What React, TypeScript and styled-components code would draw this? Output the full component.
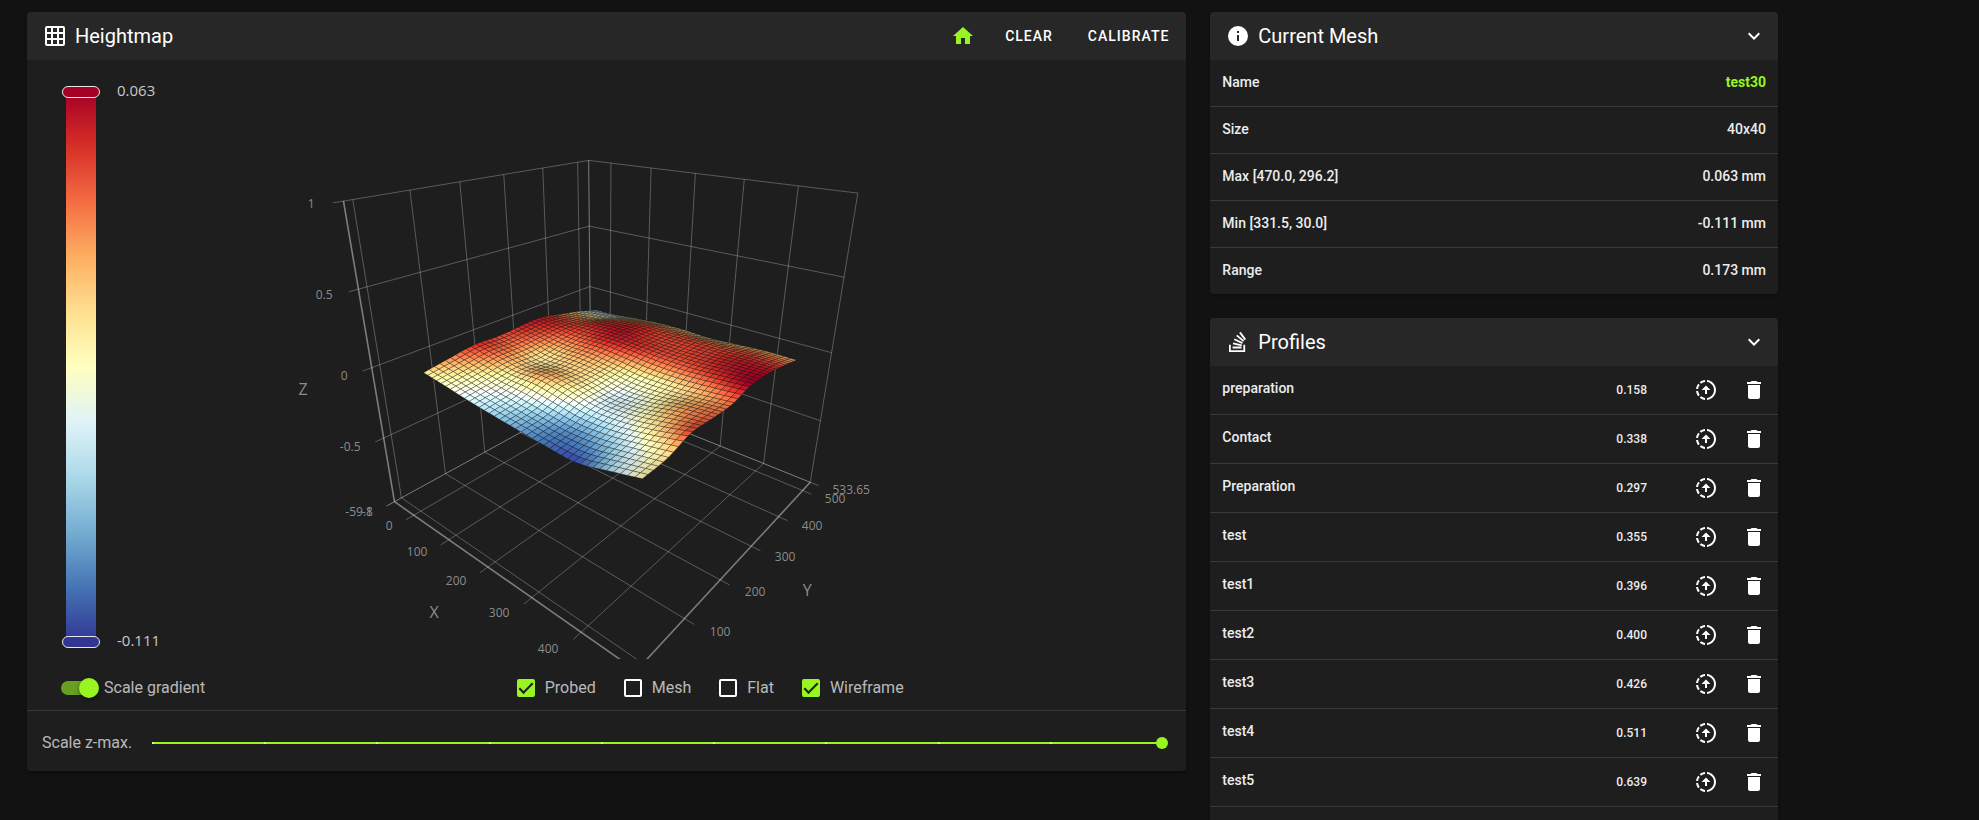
import React, { useState } from "react";
import styled, { createGlobalStyle } from "styled-components";

const accent = "#98f522";

const GlobalStyle = createGlobalStyle`
  *, *::before, *::after { box-sizing: border-box; }
  body {
    margin: 0;
    background: #121212;
    color: #fff;
    font-family: Roboto, "Liberation Sans", sans-serif;
    font-size: 16px;
    line-height: 24px;
  }
`;

/* ---------- icons ---------- */

const icons = {
  grid: "M10,4V8H14V4H10M16,4V8H20V4H16M16,10V14H20V10H16M16,16V20H20V16H16M14,20V16H10V20H14M8,20V16H4V20H8M8,14V10H4V14H8M8,8V4H4V8H8M10,14H14V10H10V14M4,2H20A2,2 0 0,1 22,4V20A2,2 0 0,1 20,22H4C2.92,22 2,21.1 2,20V4A2,2 0 0,1 4,2Z",
  home: "M10,20V14H14V20H19V12H22L12,3L2,12H5V20H10Z",
  info: "M13,9H11V7H13M13,17H11V11H13M12,2A10,10 0 0,0 2,12A10,10 0 0,0 12,22A10,10 0 0,0 22,12A10,10 0 0,0 12,2Z",
  chevron: "M7.41,8.58L12,13.17L16.59,8.58L18,10L12,16L6,10L7.41,8.58Z",
  stack: "M17.36,20.2V14.82H19.15V22H3V14.82H4.8V20.2H17.36M6.77,14.32L7.14,12.56L15.93,14.41L15.56,16.17L6.77,14.32M7.93,10.11L8.69,8.5L16.83,12.28L16.07,13.9L7.93,10.11M10.19,6.12L11.34,4.74L18.24,10.5L17.09,11.87L10.19,6.12M14.64,1.87L20,9.08L18.56,10.15L13.2,2.94L14.64,1.87M6.59,18.41V16.61H15.57V18.41H6.59Z",
  upload: "M13,2.03V2.05L13,4.05C17.39,4.59 20.5,8.58 19.96,12.97C19.5,16.61 16.64,19.5 13,19.93V21.93C18.5,21.38 22.5,16.5 21.95,11C21.5,6.25 17.73,2.5 13,2.03M11,2.06C9.05,2.25 7.19,3 5.67,4.26L7.1,5.74C8.22,4.84 9.57,4.26 11,4.06V2.06M4.26,5.67C3,7.19 2.25,9.04 2.05,11H4.05C4.24,9.58 4.8,8.23 5.69,7.1L4.26,5.67M2.06,13C2.26,14.96 3.03,16.81 4.27,18.33L5.69,16.9C4.81,15.77 4.24,14.42 4.06,13H2.06M7.1,18.37L5.67,19.74C7.18,21 9.04,21.79 11,22V20C9.58,19.82 8.23,19.25 7.1,18.37M12,7.5L7.5,12H11V16H13V12H16.5L12,7.5Z",
  trash: "M19,4H15.5L14.5,3H9.5L8.5,4H5V6H19M6,19A2,2 0 0,0 8,21H16A2,2 0 0,0 18,19V7H6V19Z",
};

const IconSvg = styled.svg`
  display: block;
  width: 24px;
  height: 24px;
  flex: none;
  fill: currentColor;
`;

const Icon = ({ name }: { name: keyof typeof icons }) => (
  <IconSvg viewBox="0 0 24 24" aria-hidden="true">
    <path d={icons[name]} />
  </IconSvg>
);

/* ---------- layout ---------- */

const Page = styled.main`
  height: 100vh;
  overflow-y: auto;
  scrollbar-width: none;
`;

const Columns = styled.div`
  display: flex;
  align-items: flex-start;
  max-width: 1775px;
  margin-left: 15px;
  padding-top: 12px;
`;

const Column = styled.div<{ $share: number }>`
  flex: none;
  width: calc(100% * ${(p) => p.$share} / 3);
  min-width: 0;
  display: flex;
  flex-direction: column;
  gap: 24px;
  padding: 0 12px;
`;

const Card = styled.section`
  background: #1e1e1e;
  border-radius: 4px;
  overflow: hidden;
  box-shadow: 0 2px 3px rgba(0, 0, 0, 0.3);
`;

const CardHeader = styled.header`
  display: flex;
  align-items: center;
  gap: 8px;
  height: 48px;
  padding: 0 12px 0 16px;
  background: #272727;
`;

const CardTitle = styled.h2`
  flex: 1;
  margin: 0;
  font-size: 20px;
  font-weight: 400;
  line-height: 24px;
`;

const IconButton = styled.button<{ $accent?: boolean }>`
  display: inline-flex;
  padding: 0;
  border: 0;
  background: none;
  color: ${(p) => (p.$accent ? accent : "#fff")};
  cursor: pointer;
  vertical-align: middle;
`;

const HeaderActions = styled.div`
  display: flex;
  align-items: center;
`;

const TextButton = styled.button`
  padding: 0 5px 0 30px;
  border: 0;
  background: none;
  color: #fff;
  font: 500 14px/20px Roboto, "Liberation Sans", sans-serif;
  letter-spacing: 1px;
  text-transform: uppercase;
  cursor: pointer;
`;

/* ---------- chart ---------- */

const ChartArea = styled.div`
  display: grid;
  > * { grid-area: 1 / 1; }
`;

const Plot = styled.svg`
  display: block;
  width: 100%;
  height: 599px;
  font-family: "Open Sans", "Noto Sans", sans-serif;
`;

const Legend = styled.div`
  display: flex;
  gap: 17px;
  height: 562px;
  margin: 26px 0 0 35px;
  justify-self: start;
`;

const LegendScale = styled.div`
  display: flex;
  flex-direction: column;
  align-items: center;
`;

const LegendHandle = styled.div<{ $color: string }>`
  position: relative;
  width: 38px;
  height: 12px;
  border: 1px solid #e8e8e8;
  border-radius: 6px;
  background: ${(p) => p.$color};
`;

const LegendBar = styled.div`
  flex: 1;
  width: 30px;
  margin: -6px 0;
  background: linear-gradient(
    #a50026, #d73027, #f46d43, #fdae61, #fee090, #ffffbf,
    #e0f3f8, #abd9e9, #74add1, #4575b4, #313695
  );
`;

const LegendLabels = styled.div`
  display: flex;
  flex-direction: column;
  justify-content: space-between;
  padding-bottom: 4px;
  color: #c8c8c8;
  font: 15px/8px "Open Sans", "Noto Sans", sans-serif;
`;

const stops = [
  [0x31, 0x36, 0x95], [0x45, 0x75, 0xb4], [0x74, 0xad, 0xd1], [0xab, 0xd9, 0xe9],
  [0xe0, 0xf3, 0xf8], [0xff, 0xff, 0xbf], [0xfe, 0xe0, 0x90], [0xfd, 0xae, 0x61],
  [0xf4, 0x6d, 0x43], [0xd7, 0x30, 0x27], [0xa5, 0x00, 0x26],
];

/* relative heights, one row per Y position (front to back), one column per X position */
const heights = [
  [0.62, 0.5, 0.36, 0.25, 0.16, 0.07, 0.02, 0.27, 0.54],
  [0.77, 0.62, 0.48, 0.38, 0.26, 0.16, 0.22, 0.4, 0.6],
  [0.91, 0.77, 0.63, 0.7, 0.55, 0.38, 0.42, 0.6, 0.86],
  [0.87, 0.76, 0.58, 0.62, 0.57, 0.4, 0.48, 0.7, 0.82],
  [0.93, 0.83, 0.72, 0.74, 0.65, 0.55, 0.57, 0.67, 0.8],
  [0.95, 0.89, 0.86, 0.92, 0.88, 0.82, 0.82, 0.9, 1],
  [0.76, 0.78, 0.92, 0.95, 0.88, 0.86, 0.88, 0.95, 0.98],
  [0.55, 0.55, 0.74, 0.85, 0.83, 0.84, 0.84, 0.87, 0.85],
  [0.28, 0.33, 0.45, 0.54, 0.56, 0.53, 0.6, 0.67, 0.67],
];

const cubic = (p: number[], t: number) =>
  p[1] + 0.5 * t * (p[2] - p[0] + t * (2 * p[0] - 5 * p[1] + 4 * p[2] - p[3] + t * (3 * (p[1] - p[2]) + p[3] - p[0])));

const along = (values: number[], t: number) => {
  const last = values.length - 1;
  const i = Math.min(last - 1, Math.floor(t * last));
  const at = (k: number) =>
    k < 0 ? 2 * values[0] - values[1] : k > last ? 2 * values[last] - values[last - 1] : values[k];
  return cubic([at(i - 1), at(i), at(i + 1), at(i + 2)], t * last - i);
};

const level = (u: number, v: number) =>
  Math.max(0, Math.min(1, along(heights.map((row) => along(row, u)), v)));

/* homogeneous projection of the plot box: origin plus one vector per axis */
const origin = [367.3, 441.7, 1];
const axisX = [73.1, -0.1, -0.277];
const axisY = [377.9, -0.3, 0.322];
const axisZ = [-113, -328.3, -0.196];

type Point = [number, number];

const project = (s: number, t: number, h: number): Point => {
  const [x, y, w] = origin.map((o, i) => o + s * axisX[i] + t * axisY[i] + h * axisZ[i]);
  return [x / w, y / w];
};

const sx = (x: number) => (x + 59.8) / 558;
const sy = (y: number) => (y + 15) / 548.65;
const sz = (z: number) => (z + 1) / 2;

const paint = (n: number, shade: number) => {
  const f = n * 10;
  const i = Math.min(9, Math.floor(f));
  const c = stops[i].map((a, k) => Math.round(Math.min(255, (a + (stops[i + 1][k] - a) * (f - i)) * shade)));
  return `rgb(${c.join(",")})`;
};

const count = 39;

const buildCells = () => {
  const levels = Array.from({ length: count + 1 }, (_, j) =>
    Array.from({ length: count + 1 }, (_, i) => level(i / count, j / count)),
  );
  const corner = (i: number, j: number) =>
    project(sx(20 + (446 * i) / count), sy(30 + (432.5 * j) / count), sz(-0.111 + 0.174 * levels[j][i]));
  const cells: { points: string; fill: string }[] = [];
  for (let j = count - 1; j >= 0; j--) {
    for (let i = 0; i < count; i++) {
      const [a, b, c, d] = [levels[j][i], levels[j][i + 1], levels[j + 1][i + 1], levels[j + 1][i]];
      const slopeX = ((b + c - a - d) / 2) * count;
      const slopeY = ((c + d - a - b) / 2) * count;
      const shade = Math.max(0.82, Math.min(1.08, 0.95 + 0.08 * slopeY - 0.05 * slopeX));
      cells.push({
        points: [corner(i, j), corner(i + 1, j), corner(i + 1, j + 1), corner(i, j + 1)]
          .map((p) => p.map((q) => q.toFixed(1)).join(","))
          .join(" "),
        fill: paint((a + b + c + d) / 4, shade),
      });
    }
  }
  return cells;
};

const cells = buildCells();

const segment = (a: Point, b: Point) => `M${a[0].toFixed(1)} ${a[1].toFixed(1)}L${b[0].toFixed(1)} ${b[1].toFixed(1)}`;

const xTicks = [0, 100, 200, 300, 400].map(sx);
const yTicks = [0, 100, 200, 300, 400, 500].map(sy);
const zTicks = [-0.5, 0, 0.5, 1].map(sz);

const gridLines = [
  ...xTicks.flatMap((s) => [
    segment(project(s, -0.03, 0), project(s, 1, 0)),
    segment(project(s, 1, 0), project(s, 1, 1)),
  ]),
  ...yTicks.flatMap((t) => [
    segment(project(0, t, 0), project(1.03, t, 0)),
    segment(project(0, t, 0), project(0, t, 1)),
  ]),
  ...zTicks.flatMap((h) => [
    segment(project(0, -0.03, h), project(0, 1, h)),
    segment(project(0, 1, h), project(1, 1, h)),
  ]),
  segment(project(1, 1, 0), project(1, 1, 1)),
  segment(project(1, 1, 0), project(1.03, 1, 0)),
].join("");

const edgeLines = [
  segment(project(0, -0.03, 0), project(0, 1, 0)),
  segment(project(0, 1, 0), project(1, 1, 0)),
  segment(project(0, 1, 0), project(0, 1, 1)),
].join("");

const axisLines = [
  segment(project(0, 0, 0), project(0, 0, 1)),
  segment(project(0, 0, 0), project(1, 0, 0)),
  segment(project(1, 0, 0), project(1, 1, 0)),
].join("");

const tickLabels: [string, number, number][] = [
  ["1", 284, 144], ["0.5", 297, 235], ["0", 317, 316], ["-0.5", 323, 387],
  ["-59.8", 332, 452], ["-1", 340, 452],
  ["0", 362, 466], ["100", 390, 492], ["200", 429, 521], ["300", 472, 553], ["400", 521, 589],
  ["533.65", 824, 430], ["500", 808, 439], ["400", 785, 466], ["300", 758, 497], ["200", 728, 532], ["100", 693, 572],
];

const axisNames: [string, number, number][] = [["Z", 276, 329], ["X", 407, 552], ["Y", 780, 530]];

const HeightmapPlot = () => (
  <Plot viewBox="0 0 1159 599" role="img" aria-label="Heightmap">
    <g fill="none">
      <path d={gridLines} stroke="#fff" strokeOpacity="0.27" />
      <path d={edgeLines} stroke="#fff" strokeOpacity="0.42" />
      <path d={axisLines} stroke="#fff" strokeOpacity="0.42" strokeWidth="1.6" />
    </g>
    <g stroke="#141414" strokeOpacity="0.4" strokeWidth="0.8" strokeLinejoin="round">
      {cells.map((cell, i) => (
        <polygon key={i} points={cell.points} fill={cell.fill} />
      ))}
    </g>
    <g fill="#8c8c8c" fontSize="12" textAnchor="middle">
      {tickLabels.map(([label, x, y]) => (
        <text key={`${label}-${x}`} x={x} y={y + 4}>{label}</text>
      ))}
    </g>
    <g fill="#8c8c8c" fontSize="16" textAnchor="middle">
      {axisNames.map(([label, x, y]) => (
        <text key={label} x={x} y={y + 6}>{label}</text>
      ))}
    </g>
  </Plot>
);

/* ---------- controls ---------- */

const Controls = styled.div`
  display: flex;
  align-items: center;
  height: 51px;
  padding-top: 7px;
  color: rgba(255, 255, 255, 0.7);
`;

const SwitchLabel = styled.label`
  display: flex;
  align-items: center;
  gap: 5px;
  min-width: 207px;
  padding-left: 34px;
  white-space: nowrap;
`;

const Switch = styled.input`
  appearance: none;
  position: relative;
  width: 38px;
  height: 20px;
  margin: 0;
  cursor: pointer;
  &::before {
    content: "";
    position: absolute;
    inset: 3px 2px 3px 0;
    border-radius: 7px;
    background: rgba(255, 255, 255, 0.3);
  }
  &::after {
    content: "";
    position: absolute;
    top: 0;
    left: 0;
    width: 20px;
    height: 20px;
    border-radius: 50%;
    background: #bdbdbd;
    box-shadow: 0 2px 4px rgba(0, 0, 0, 0.4);
  }
  &:checked::before { background: #679f20; }
  &:checked::after { left: 18px; background: ${accent}; }
`;

const CheckGroup = styled.div`
  flex: 1;
  display: flex;
  justify-content: center;
  gap: 28px;
`;

const CheckLabel = styled.label`
  display: flex;
  align-items: center;
  gap: 10px;
`;

const CheckBox = styled.input`
  appearance: none;
  display: grid;
  place-items: center;
  width: 18px;
  height: 18px;
  margin: 0;
  border: 2px solid #fff;
  border-radius: 2px;
  cursor: pointer;
  &:checked { border-color: ${accent}; background: ${accent}; }
  &:checked::after {
    content: "";
    width: 14px;
    height: 7px;
    border: solid #1e1e1e;
    border-width: 0 0 2px 2px;
    transform: translateY(-2px) rotate(-45deg);
  }
`;

const SliderRow = styled.label`
  display: flex;
  align-items: center;
  gap: 14px;
  height: 61px;
  padding: 4px 18px 0 15px;
  border-top: 1px solid #393939;
  color: rgba(255, 255, 255, 0.7);
  white-space: nowrap;
`;

const Slider = styled.input`
  appearance: none;
  flex: 1;
  min-width: 0;
  height: 12px;
  margin: 0;
  cursor: pointer;
  background:
    repeating-linear-gradient(to right, #d4fba0 0 2px, ${accent} 2px calc(100% / 9))
    center / calc(100% - 12px) 2px no-repeat;
  &::-webkit-slider-thumb {
    appearance: none;
    width: 12px;
    height: 12px;
    border-radius: 50%;
    background: ${accent};
  }
`;

/* ---------- tables ---------- */

const Table = styled.table`
  width: 100%;
  border-spacing: 0;
  font-size: 14px;
  line-height: 20px;
`;

const MeshRow = styled.tr`
  > * {
    height: 47px;
    padding: 0 12px 2px;
    border-bottom: 1px solid #393939;
    font-weight: 500;
    color: #ececec;
  }
  > th { text-align: left; }
  > td { text-align: right; }
  &:last-child > * { height: 46px; border-bottom: 0; }
`;

const Highlight = styled.span`
  color: ${accent};
  font-weight: 700;
`;

const ProfileRow = styled.tr`
  > * {
    height: 49px;
    padding: 0;
    border-bottom: 1px solid #393939;
    text-align: center;
  }
`;

const ProfileName = styled.th`
  && {
    padding: 0 12px 4px;
    text-align: left;
    font-weight: 500;
    color: #ececec;
  }
`;

const ProfileRange = styled.td`
  && {
    width: 100px;
    padding-right: 35px;
    text-align: right;
    font-size: 12px;
    font-weight: 500;
    color: #ececec;
  }
`;

const ActionCell = styled.td`
  width: 48px;
`;

const ListTail = styled.div`
  height: 24px;
`;

const meshRows: [string, string][] = [
  ["Size", "40x40"],
  ["Max [470.0, 296.2]", "0.063 mm"],
  ["Min [331.5, 30.0]", "-0.111 mm"],
  ["Range", "0.173 mm"],
];

const profiles: [string, string][] = [
  ["preparation", "0.158"], ["Contact", "0.338"], ["Preparation", "0.297"],
  ["test", "0.355"], ["test1", "0.396"], ["test2", "0.400"],
  ["test3", "0.426"], ["test4", "0.511"], ["test5", "0.639"],
];

const App = () => {
  const [zMax, setZMax] = useState(9);
  return (
    <Page>
      <GlobalStyle />
      <Columns>
        <Column $share={2}>
          <Card>
            <CardHeader>
              <Icon name="grid" />
              <CardTitle>Heightmap</CardTitle>
              <HeaderActions>
                <IconButton $accent aria-label="Home"><Icon name="home" /></IconButton>
                <TextButton>Clear</TextButton>
                <TextButton>Calibrate</TextButton>
              </HeaderActions>
            </CardHeader>
            <ChartArea>
              <HeightmapPlot />
              <Legend>
                <LegendScale>
                  <LegendHandle $color="#a50026" />
                  <LegendBar />
                  <LegendHandle $color="#313695" />
                </LegendScale>
                <LegendLabels>
                  <span>0.063</span>
                  <span>-0.111</span>
                </LegendLabels>
              </Legend>
            </ChartArea>
            <Controls>
              <SwitchLabel>
                <Switch type="checkbox" role="switch" defaultChecked />
                Scale gradient
              </SwitchLabel>
              <CheckGroup>
                <CheckLabel><CheckBox type="checkbox" defaultChecked />Probed</CheckLabel>
                <CheckLabel><CheckBox type="checkbox" />Mesh</CheckLabel>
                <CheckLabel><CheckBox type="checkbox" />Flat</CheckLabel>
                <CheckLabel><CheckBox type="checkbox" defaultChecked />Wireframe</CheckLabel>
              </CheckGroup>
            </Controls>
            <SliderRow>
              Scale z-max.
              <Slider type="range" min={0} max={9} value={zMax} onChange={(e) => setZMax(Number(e.target.value))} />
            </SliderRow>
          </Card>
        </Column>
        <Column $share={1}>
          <Card>
            <CardHeader>
              <Icon name="info" />
              <CardTitle>Current Mesh</CardTitle>
              <IconButton aria-label="Collapse current mesh"><Icon name="chevron" /></IconButton>
            </CardHeader>
            <Table>
              <tbody>
                <MeshRow>
                  <th scope="row">Name</th>
                  <td><Highlight>test30</Highlight></td>
                </MeshRow>
                {meshRows.map(([label, value]) => (
                  <MeshRow key={label}>
                    <th scope="row">{label}</th>
                    <td>{value}</td>
                  </MeshRow>
                ))}
              </tbody>
            </Table>
          </Card>
          <Card>
            <CardHeader>
              <Icon name="stack" />
              <CardTitle>Profiles</CardTitle>
              <IconButton aria-label="Collapse profiles"><Icon name="chevron" /></IconButton>
            </CardHeader>
            <Table>
              <tbody>
                {profiles.map(([name, range]) => (
                  <ProfileRow key={name}>
                    <ProfileName scope="row">{name}</ProfileName>
                    <ProfileRange>{range}</ProfileRange>
                    <ActionCell>
                      <IconButton aria-label={`Load ${name}`}><Icon name="upload" /></IconButton>
                    </ActionCell>
                    <ActionCell>
                      <IconButton aria-label={`Delete ${name}`}><Icon name="trash" /></IconButton>
                    </ActionCell>
                  </ProfileRow>
                ))}
              </tbody>
            </Table>
            <ListTail />
          </Card>
        </Column>
      </Columns>
    </Page>
  );
};

export default App;
